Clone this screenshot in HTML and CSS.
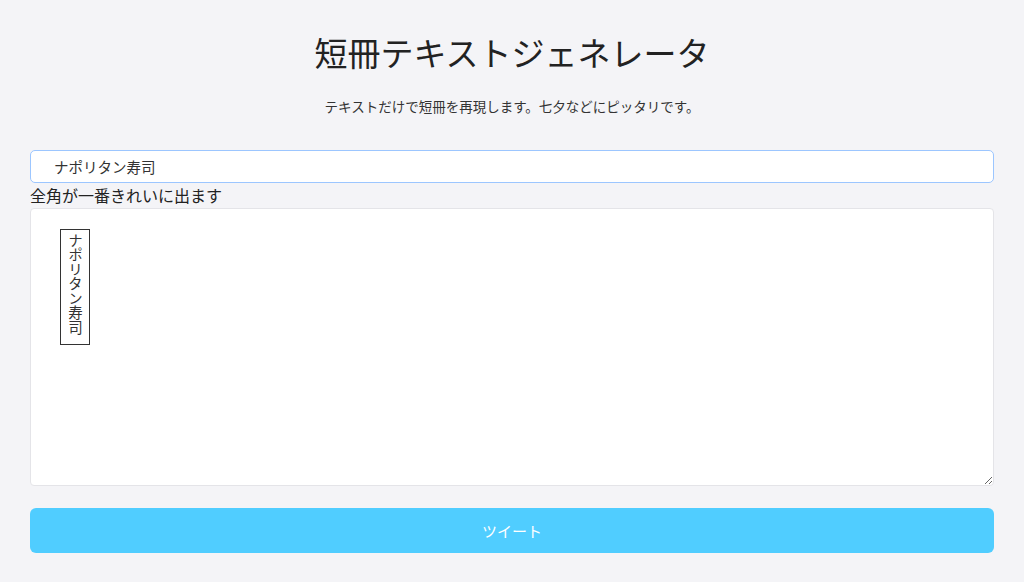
FILE: index.html
```html
<!DOCTYPE html>
<html lang="ja">
<head>
  <meta charset="UTF-8" />
  <title>短冊テキストジェネレータ</title>
  <link rel="stylesheet" href="styles.css">
</head>
<body>
  <div class="container">
    <!-- Title -->
    <h1 class="title">短冊テキストジェネレータ</h1>
    <p class="lead">テキストだけで短冊を再現します。七夕などにピッタリです。</p>

    <!-- Input -->
    <input class="text-input" type="text" value="ナポリタン寿司" />
    <div class="hint">全角が一番きれいに出ます</div>

    <!-- Preview -->
    <div class="preview">
      <div class="tanzaku">ナポリタン寿司</div>
    </div>

    <button class="tweet">ツイート</button>
  </div>
</body>
</html>
```

FILE: styles.css
```css
* {
  box-sizing: border-box;
  margin: 0;
  padding: 0;
}

html, body {
  height: 100%;
  background: #f4f4f7;
  color: #222;
  font-family: "Noto Sans CJK JP", "Noto Sans", sans-serif;
  overflow: hidden;
}

.container {
  padding: 0 30px;
  display: flex;
  flex-direction: column;
}

.title {
  margin-top: 30px;
  font-size: 33px;
  font-weight: 400;
  line-height: 44px;
  text-align: center;
  color: #222;
}

.lead {
  margin-top: 22px;
  font-size: 13.5px;
  line-height: 20px;
  text-align: center;
  color: #333;
}

.text-input {
  margin-top: 34px;
  height: 33px;
  width: 100%;
  padding: 0 0 0 23px;
  font-family: inherit;
  font-size: 14.5px;
  color: #333;
  background: #fff;
  border: 1px solid #9cc6ff;
  border-radius: 5px;
  outline: none;
}

.hint {
  margin-top: 1px;
  font-size: 16px;
  line-height: 22px;
  color: #222;
}

.preview {
  margin-top: 2px;
  height: 278px;
  background: #fff;
  border: 1px solid #e4e4e8;
  border-radius: 4px;
  padding: 20px 29px;
  resize: vertical;
  overflow: auto;
}

.tanzaku {
  writing-mode: vertical-rl;
  width: 30px;
  height: 116px;
  border: 1px solid #333;
  font-size: 14.5px;
  line-height: 28px;
  padding-top: 3px;
  color: #333;
}

.tweet {
  margin-top: 22px;
  height: 45px;
  width: 100%;
  background: #50cdff;
  color: #fff;
  border: none;
  border-radius: 6px;
  font-family: inherit;
  font-size: 15px;
  cursor: pointer;
}
```
